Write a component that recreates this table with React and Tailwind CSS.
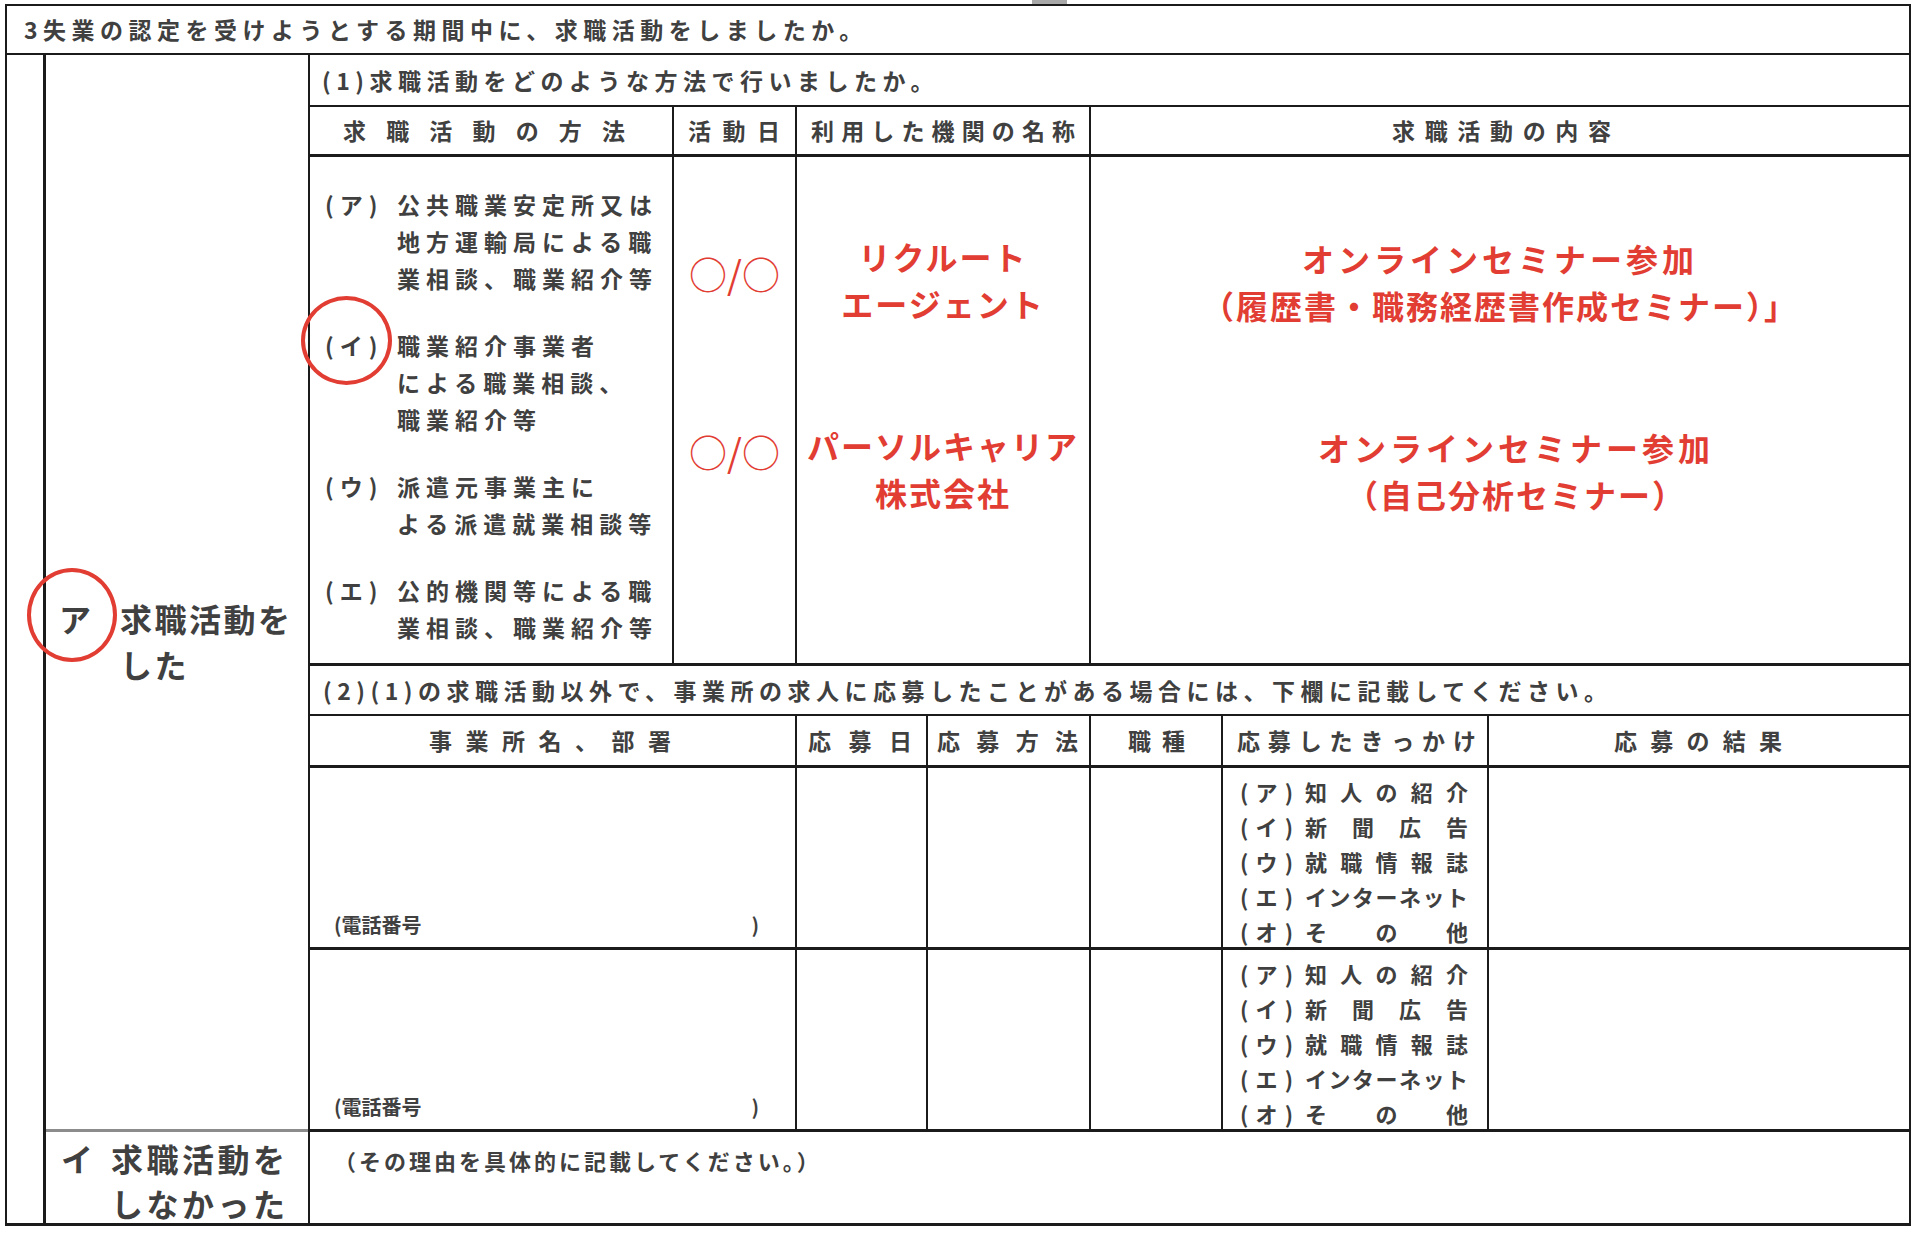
import React from "react";

const methods = [
  { label: "(ア)", lines: ["公共職業安定所又は", "地方運輸局による職", "業相談、職業紹介等"] },
  { label: "(イ)", lines: ["職業紹介事業者", "による職業相談、", "職業紹介等"] },
  { label: "(ウ)", lines: ["派遣元事業主に", "よる派遣就業相談等"] },
  { label: "(エ)", lines: ["公的機関等による職", "業相談、職業紹介等"] },
];

const triggers = [
  ["ア", "知人の紹介"],
  ["イ", "新聞広告"],
  ["ウ", "就職情報誌"],
  ["エ", "インターネット"],
  ["オ", "その他"],
];

// spreads the characters evenly over a fixed width, like the printed form
function Spread({ text, className = "" }) {
  return (
    <div className={"flex justify-between " + className}>
      {Array.from(text).map((c, i) => (
        <span key={i}>{c}</span>
      ))}
    </div>
  );
}

function ApplyRow() {
  return (
    <div className="grid grid-cols-[487px_131px_163px_132px_266px_1fr] h-[182px] border-b-[3px] border-[#1b1b1b] tracking-normal">
      <div className="border-r-2 border-[#1b1b1b] flex items-end pl-[24px] pr-[36px] pb-[10px]">
        <div className="flex-1 flex justify-between text-[20px] leading-[28px]">
          <span>(電話番号</span>
          <span>)</span>
        </div>
      </div>
      <div className="border-r-2 border-[#1b1b1b]" />
      <div className="border-r-2 border-[#1b1b1b]" />
      <div className="border-r-2 border-[#1b1b1b]" />
      <div className="border-r-2 border-[#1b1b1b] pl-[17px] pt-[6px] text-[22px] leading-[35px]">
        {triggers.map(([k, v]) => (
          <div key={k} className="flex">
            <Spread text={`(${k})`} className="w-[53px]" />
            <Spread text={v} className="w-[163px] ml-[12px]" />
          </div>
        ))}
      </div>
      <div />
    </div>
  );
}

export default function App() {
  return (
    <div className="relative w-[1920px] h-[1237px] bg-white text-[#404040] font-semibold font-['Noto_Sans_CJK_JP','Noto_Sans',sans-serif] overflow-hidden">
      <div className="h-[4px]">
        <div className="ml-[1032px] w-[35px] h-full bg-[#a8a8a8]" />
      </div>

      <div className="ml-[5px] w-[1906px] h-[1222px] border-2 border-b-[3px] border-[#1b1b1b] flex flex-col">
        <div className="h-[49px] shrink-0 border-b-2 border-[#1b1b1b] flex items-center pl-[17px] text-[23px] tracking-[5.5px]">
          3失業の認定を受けようとする期間中に、求職活動をしましたか。
        </div>

        <div className="flex-1 pl-[36px] flex">
          <div className="flex-1 border-l-[3px] border-[#1b1b1b] flex flex-col">
            {/* ア 求職活動をした */}
            <div className="flex h-[1077px] shrink-0">
              <div className="w-[262px] border-b-[3px] border-[#8c8c8c] pt-[540px] pl-[13px] flex text-[32px] leading-[46px] tracking-[2.5px]">
                <span className="w-[61px]">ア</span>
                <div>
                  <div>求職活動を</div>
                  <div>した</div>
                </div>
              </div>

              <div className="flex-1 border-l-2 border-[#1b1b1b] flex flex-col text-[23px] tracking-[5.5px]">
                <div className="h-[52px] border-b-2 border-[#1b1b1b] flex items-center pl-[12px]">
                  (1)求職活動をどのような方法で行いましたか。
                </div>

                <div className="grid grid-cols-[364px_123px_294px_1fr] h-[50px] border-b-[3px] border-[#1b1b1b] tracking-normal">
                  <div className="border-r-2 border-[#1b1b1b] flex items-center">
                    <Spread text="求職活動の方法" className="w-[282px] ml-[33px]" />
                  </div>
                  <div className="border-r-2 border-[#1b1b1b] flex items-center">
                    <Spread text="活動日" className="w-[92px] ml-[14px]" />
                  </div>
                  <div className="border-r-2 border-[#1b1b1b] flex items-center">
                    <Spread text="利用した機関の名称" className="w-[264px] ml-[14px]" />
                  </div>
                  <div className="flex items-center">
                    <Spread text="求職活動の内容" className="w-[219px] ml-[301px]" />
                  </div>
                </div>

                <div className="grid grid-cols-[364px_123px_294px_1fr] h-[509px] border-b-[3px] border-[#1b1b1b]">
                  <div className="border-r-2 border-[#1b1b1b] pl-[15px] pt-[29px] flex flex-col gap-[30px] leading-[37px] tracking-[6px]">
                    {methods.map((m) => (
                      <div key={m.label} className="flex">
                        <span className="w-[72px] tracking-[6px]">{m.label}</span>
                        <div>
                          {m.lines.map((l) => (
                            <div key={l}>{l}</div>
                          ))}
                        </div>
                      </div>
                    ))}
                  </div>

                  <div className="border-r-2 border-[#1b1b1b] flex flex-col items-center pt-[93px] gap-[132px] text-[38px] leading-[46px] font-normal tracking-normal text-[#e23d33]">
                    <div>○/○</div>
                    <div>○/○</div>
                  </div>

                  <div className="border-r-2 border-[#1b1b1b] flex flex-col items-center pt-[76px] gap-[95px] text-[32px] leading-[47px] tracking-[2px] font-bold text-[#e23d33]">
                    <div className="flex flex-col items-center">
                      <div>リクルート</div>
                      <div>エージェント</div>
                    </div>
                    <div className="flex flex-col items-center">
                      <div>パーソルキャリア</div>
                      <div>株式会社</div>
                    </div>
                  </div>

                  <div className="flex flex-col items-center pt-[78px] gap-[95px] text-[32px] leading-[47px] tracking-[2px] font-bold text-[#e23d33]">
                    <div className="flex flex-col items-center">
                      <div className="tracking-[4px]">オンラインセミナー参加</div>
                      <div>（履歴書・職務経歴書作成セミナー）」</div>
                    </div>
                    <div className="flex flex-col items-center pl-[32px]">
                      <div className="tracking-[4px]">オンラインセミナー参加</div>
                      <div>（自己分析セミナー）</div>
                    </div>
                  </div>
                </div>

                <div className="h-[50px] border-b-2 border-[#1b1b1b] flex items-center pl-[13px] tracking-[5.5px]">
                  (2)(1)の求職活動以外で、事業所の求人に応募したことがある場合には、下欄に記載してください。
                </div>

                <div className="grid grid-cols-[487px_131px_163px_132px_266px_1fr] h-[52px] border-b-[3px] border-[#1b1b1b] tracking-normal">
                  <div className="border-r-2 border-[#1b1b1b] flex items-center">
                    <Spread text="事業所名、部署" className="w-[242px] ml-[119px]" />
                  </div>
                  <div className="border-r-2 border-[#1b1b1b] flex items-center">
                    <Spread text="応募日" className="w-[104px] ml-[11px]" />
                  </div>
                  <div className="border-r-2 border-[#1b1b1b] flex items-center">
                    <Spread text="応募方法" className="w-[141px] ml-[9px]" />
                  </div>
                  <div className="border-r-2 border-[#1b1b1b] flex items-center">
                    <Spread text="職種" className="w-[57px] ml-[37px]" />
                  </div>
                  <div className="border-r-2 border-[#1b1b1b] flex items-center">
                    <Spread text="応募したきっかけ" className="w-[239px] ml-[14px]" />
                  </div>
                  <div className="flex items-center">
                    <Spread text="応募の結果" className="w-[168px] ml-[125px]" />
                  </div>
                </div>

                <ApplyRow />
                <ApplyRow />
              </div>
            </div>

            {/* イ 求職活動をしなかった */}
            <div className="flex flex-1">
              <div className="w-[262px] pl-[15px] pt-[4px] flex text-[32px] leading-[45px] tracking-[3.5px]">
                <span className="w-[50px]">イ</span>
                <div>
                  <div>求職活動を</div>
                  <div>しなかった</div>
                </div>
              </div>
              <div className="flex-1 border-l-2 border-[#1b1b1b] pl-[24px] pt-[13px] text-[22px] leading-[30px] tracking-[3px]">
                （その理由を具体的に記載してください。）
              </div>
            </div>
          </div>
        </div>
      </div>

      {/* red hand-drawn circles */}
      <div className="absolute left-[27px] top-[568px] w-[90px] h-[94px] rounded-[50%] border-[4px] border-[#e23d33]" />
      <div className="absolute left-[301px] top-[296px] w-[91px] h-[89px] rounded-[50%] border-[4px] border-[#e23d33]" />
    </div>
  );
}
